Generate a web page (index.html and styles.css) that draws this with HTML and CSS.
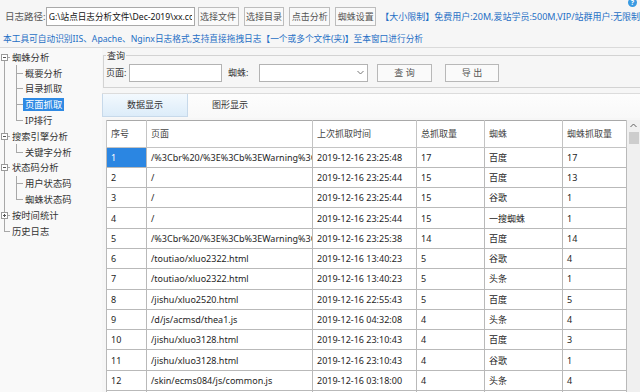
FILE: index.html
```html
<!DOCTYPE html>
<html lang="zh-CN">
<head>
  <meta charset="UTF-8" />
  <title>爱站日志分析</title>
  <link rel="stylesheet" href="styles.css">
</head>
<body>

  <header class="toolbar">
    <span class="label">日志路径:</span>
    <input class="path" type="text" value="G:\站点日志分析文件\Dec-2019\xx.com.log" />
    <button class="btn first">选择文件</button>
    <button class="btn">选择目录</button>
    <button class="btn">点击分析</button>
    <button class="btn">蜘蛛设置</button>
    <span class="limit">【大小限制】免费用户:20M,爱站学员:500M,VIP/站群用户:无限制</span>
    <span class="help">?</span>
  </header>
  <p class="hint">本工具可自动识别IIS、Apache、Nginx日志格式,支持直接拖拽日志【一个或多个文件(夹)】至本窗口进行分析</p>

  <div class="layout">
    <nav class="tree">
      <div class="node root first"><i class="box"></i><span>蜘蛛分析</span></div>
      <div class="node child"><span>概要分析</span></div>
      <div class="node child"><span>目录抓取</span></div>
      <div class="node child"><span class="sel">页面抓取</span></div>
      <div class="node child last"><span>IP排行</span></div>
      <div class="node root"><i class="box"></i><span>搜索引擎分析</span></div>
      <div class="node child last"><span>关键字分析</span></div>
      <div class="node root"><i class="box"></i><span>状态码分析</span></div>
      <div class="node child"><span>用户状态码</span></div>
      <div class="node child last"><span>蜘蛛状态码</span></div>
      <div class="node root"><i class="box closed"></i><span>按时间统计</span></div>
      <div class="node root end"><span>历史日志</span></div>
    </nav>

    <main class="content">
      <fieldset class="query">
        <legend>查询</legend>
        <div class="query-row">
          <span class="q-label">页面:</span>
          <input class="q-input" type="text" />
          <span class="q-label spider">蜘蛛:</span>
          <span class="combo">
            <svg width="7" height="5" viewBox="0 0 7 5"><path d="M0.5 1 L3.5 4 L6.5 1" fill="none" stroke="#777" stroke-width="1"/></svg>
          </span>
          <button class="q-btn">查 询</button>
          <button class="q-btn export">导 出</button>
        </div>
      </fieldset>

      <div class="tabs">
        <span class="tab active">数据显示</span>
        <span class="tab">图形显示</span>
      </div>

      <div class="grid">
        <table>
          <colgroup>
            <col style="width:40px"><col style="width:166px"><col style="width:104px">
            <col style="width:68px"><col style="width:78px"><col style="width:64px">
          </colgroup>
          <thead>
            <tr><th>序号</th><th>页面</th><th>上次抓取时间</th><th>总抓取量</th><th>蜘蛛</th><th>蜘蛛抓取量</th></tr>
          </thead>
          <tbody>
            <tr><td class="cur">1</td><td>/%3Cbr%20/%3E%3Cb%3EWarning%3C</td><td>2019-12-16 23:25:48</td><td>17</td><td>百度</td><td>17</td></tr>
            <tr><td>2</td><td>/</td><td>2019-12-16 23:25:44</td><td>15</td><td>百度</td><td>13</td></tr>
            <tr><td>3</td><td>/</td><td>2019-12-16 23:25:44</td><td>15</td><td>谷歌</td><td>1</td></tr>
            <tr><td>4</td><td>/</td><td>2019-12-16 23:25:44</td><td>15</td><td>一搜蜘蛛</td><td>1</td></tr>
            <tr><td>5</td><td>/%3Cbr%20/%3E%3Cb%3EWarning%3C</td><td>2019-12-16 23:25:38</td><td>14</td><td>百度</td><td>14</td></tr>
            <tr><td>6</td><td>/toutiao/xluo2322.html</td><td>2019-12-16 13:40:23</td><td>5</td><td>谷歌</td><td>4</td></tr>
            <tr><td>7</td><td>/toutiao/xluo2322.html</td><td>2019-12-16 13:40:23</td><td>5</td><td>头条</td><td>1</td></tr>
            <tr><td>8</td><td>/jishu/xluo2520.html</td><td>2019-12-16 22:55:43</td><td>5</td><td>百度</td><td>5</td></tr>
            <tr><td>9</td><td>/d/js/acmsd/thea1.js</td><td>2019-12-16 04:32:08</td><td>4</td><td>头条</td><td>4</td></tr>
            <tr><td>10</td><td>/jishu/xluo3128.html</td><td>2019-12-16 23:10:43</td><td>4</td><td>百度</td><td>3</td></tr>
            <tr><td>11</td><td>/jishu/xluo3128.html</td><td>2019-12-16 23:10:43</td><td>4</td><td>谷歌</td><td>1</td></tr>
            <tr><td>12</td><td>/skin/ecms084/js/common.js</td><td>2019-12-16 03:18:00</td><td>4</td><td>头条</td><td>4</td></tr>
            <tr><td>13</td><td>/jishu/xluo2188.html</td><td>2019-12-16 11:02:17</td><td>4</td><td>百度</td><td>4</td></tr>
          </tbody>
        </table>
        <div class="vscroll">
          <span class="arrow">
            <svg width="7" height="5" viewBox="0 0 7 5"><path d="M0.5 4 L3.5 1 L6.5 4" fill="none" stroke="#606060" stroke-width="1"/></svg>
          </span>
          <span class="thumb"></span>
        </div>
      </div>
    </main>
  </div>

</body>
</html>
```

FILE: styles.css
```css
/* Win32 style log analyzer */
* { box-sizing: border-box; }
body {
  margin: 0;
  width: 640px;
  height: 392px;
  overflow: hidden;
  background: #f6f6f6;
  color: #222;
  font-family: "Noto Sans", "Noto Sans CJK SC", sans-serif;
  font-size: 9px;
  position: relative;
}

/* top toolbar */
.toolbar {
  display: flex;
  align-items: center;
  height: 32px;
  padding-left: 5px;
  white-space: nowrap;
  overflow: hidden;
}
.toolbar .label {
  width: 42px;
  color: #555;
  font-size: 9.5px;
}
.path {
  width: 153px;
  height: 19px;
  border: 1px solid #a9a9a9;
  background: #fff;
  font: inherit;
  font-size: 8.6px;
  color: #111;
  padding: 0 2px;
  margin: 0;
}
.btn {
  width: 42px;
  height: 19px;
  margin: 0 0 0 5px;
  padding: 0;
  border: 1px solid #bdbdbd;
  background: #f9f9f9;
  color: #555;
  font: inherit;
}
.btn.first { margin-left: 3px; }
.limit {
  margin-left: 4px;
  color: #1f6fc5;
}
.help {
  position: absolute;
  right: 3px;
  top: -2px;
  width: 9px;
  height: 9px;
  border-radius: 50%;
  background: #3b9be2;
  color: #fff;
  font-size: 7px;
  font-weight: 700;
  line-height: 9px;
  text-align: center;
}
.hint {
  margin: 0;
  height: 16px;
  padding-left: 3px;
  line-height: 15px;
  font-size: 8.7px;
  color: #1f6fc5;
  white-space: nowrap;
  border-bottom: 1px solid #dadada;
}

/* body */
.layout {
  display: flex;
  height: 344px;
}
.tree {
  width: 102px;
  flex-shrink: 0;
  padding-top: 1.5px;
  background: #f9f9f9;
  font-size: 9.3px;
  color: #333;
}
.node {
  display: flex;
  align-items: center;
  height: 15.8px;
  white-space: nowrap;
  background-repeat: no-repeat;
}
.node span { padding: 0 2px; line-height: 13px; }
.node.root span { margin-left: 2px; }
.node.end span { margin-left: 10px; }
.node.child span { margin-left: 23px; }
.node.root {
  background-image: linear-gradient(#a8a8a8, #a8a8a8), linear-gradient(#a8a8a8, #a8a8a8);
  background-position: 4px 0, 4px 50%;
  background-size: 1px 100%, 6px 1px;
}
.node.root.first { background-position: 4px 100%, 4px 50%; background-size: 1px 50%, 6px 1px; }
.node.root.end { background-size: 1px 50%, 6px 1px; }
.node.child {
  background-image: linear-gradient(#a8a8a8, #a8a8a8), linear-gradient(#a8a8a8, #a8a8a8), linear-gradient(#a8a8a8, #a8a8a8);
  background-position: 4px 0, 16px 0, 16px 50%;
  background-size: 1px 100%, 1px 100%, 7px 1px;
}
.node.child.last { background-size: 1px 100%, 1px 50%, 7px 1px; }
.box {
  width: 7px;
  height: 7px;
  margin-left: 1px;
  border: 1px solid #9a9a9a;
  background: linear-gradient(#555, #555) center / 3px 1px no-repeat, #fff;
}
.box.closed {
  background: linear-gradient(#555, #555) center / 3px 1px no-repeat,
              linear-gradient(#555, #555) center / 1px 3px no-repeat, #fff;
}
.node .sel {
  background: #2f8ae4;
  color: #fff;
}

.content {
  flex: 1;
  min-width: 0;
  padding-top: 1.5px;
  overflow: hidden;
}

/* query group box */
.query {
  margin: 0 -8px 0 1px;
  padding: 3px 2px 5px;
  border: 1px solid #d3d3d3;
  min-width: 0;
}
.query legend {
  padding: 0 1px;
  line-height: 11px;
  color: #333;
}
.query-row {
  display: flex;
  align-items: center;
  height: 18px;
}
.q-label {
  width: 23px;
  color: #333;
}
.q-label.spider {
  width: 31px;
  margin-left: 6px;
}
.q-input {
  width: 93px;
  height: 18px;
  margin: 0;
  border: 1px solid #b3b3b3;
  background: #fff;
}
.combo {
  width: 109px;
  height: 18px;
  border: 1px solid #b3b3b3;
  background: #fff;
  display: flex;
  align-items: center;
  justify-content: flex-end;
  padding-right: 3px;
}
.q-btn {
  width: 55px;
  height: 18px;
  margin: 0 0 0 9px;
  padding: 0;
  border: 1px solid #b8b8b8;
  background: #fafafa;
  color: #555;
  font: inherit;
}
.q-btn.export { width: 54px; margin-left: 13px; }

/* tabs */
.tabs {
  display: flex;
  height: 25px;
  margin-top: 5px;
  border-top: 1px solid #dcdcdc;
  background: linear-gradient(#fdfdfd, #f8f8f8);
}
.tab {
  width: 84px;
  height: 23px;
  line-height: 22px;
  text-align: center;
  color: #333;
}
.tab.active {
  width: 86px;
  border: 1px solid #c7d9ea;
  border-top: none;
  background: linear-gradient(#f3f9fe, #dcecf9);
}

/* data grid */
.grid {
  display: flex;
  margin: 2px 0 0 4px;
  height: 300px;
  overflow: hidden;
}
.grid table {
  width: 520px;
  flex-shrink: 0;
  border-collapse: collapse;
  table-layout: fixed;
  background: #fff;
  border: 1px solid #a9a9a9;
  align-self: flex-start;
}
.grid th {
  height: 27px;
  padding: 0 4px;
  text-align: left;
  font-weight: normal;
  color: #444;
  border: 1px solid #c4c4c4;
  border-top: none;
}
.grid td {
  height: 20.3px;
  padding: 0 4px;
  border: 1px solid #b9b9b9;
  white-space: nowrap;
  overflow: hidden;
  text-overflow: clip;
  color: #1e1e1e;
}
.grid td.cur {
  background: #2b86e2;
  color: #fff;
}
.vscroll {
  width: 14px;
  display: flex;
  flex-direction: column;
  align-items: center;
  background: #f0f0f0;
}
.vscroll .arrow {
  height: 12px;
  display: flex;
  align-items: center;
}
.vscroll .thumb {
  width: 10px;
  height: 12px;
  background: #cdcdcd;
}
```
